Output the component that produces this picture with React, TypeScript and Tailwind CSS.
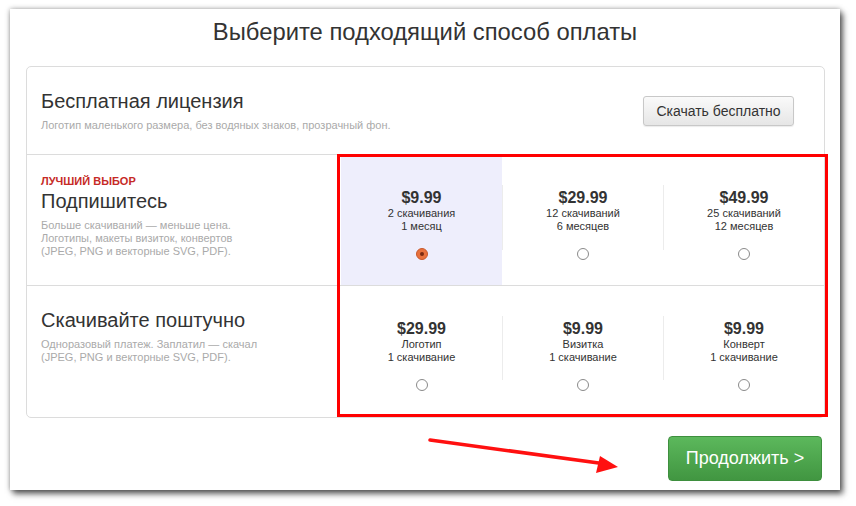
import React from "react";

const font = { fontFamily: '"Liberation Sans", Arial, sans-serif' };

function Radio({ checked }: { checked?: boolean }) {
  if (checked) {
    return (
      <div className="w-[12px] h-[12px] rounded-full bg-[#e8713c] border border-[#c9582a] flex items-center justify-center">
        <div className="w-[4px] h-[4px] rounded-full bg-[#7a2a10]" />
      </div>
    );
  }
  return <div className="w-[12px] h-[12px] rounded-full border border-[#8a8a8a] bg-white" />;
}

function Option({
  price,
  l1,
  l2,
  checked,
  divider,
  top,
  divH,
  radioTop,
  bg,
}: {
  price: string;
  l1: string;
  l2: string;
  checked?: boolean;
  divider?: boolean;
  top: string;
  divH: string;
  radioTop: string;
  bg?: boolean;
}) {
  return (
    <div className={`flex-1 flex flex-col items-center ${bg ? "bg-[#eeeefc]" : ""}`}>
      <div className={`w-full ${top} ${divH} flex flex-col items-center ${divider ? "border-l border-[#ececec]" : ""}`}>
        <div className="text-[16px] leading-[18px] font-bold text-[#333] mt-[4px]">{price}</div>
        <div className="text-[11px] leading-[13px] text-[#333]">{l1}</div>
        <div className="text-[11px] leading-[13px] text-[#333]">{l2}</div>
      </div>
      <div className={radioTop}>
        <Radio checked={checked} />
      </div>
    </div>
  );
}

export default function App() {
  return (
    <div className="w-[856px] h-[506px] bg-white relative overflow-hidden" style={font}>
      <div className="absolute left-[10px] top-[9px] w-[830px] h-[481px] bg-white shadow-[0_0_5px_rgba(0,0,0,0.35),3px_4px_6px_rgba(0,0,0,0.6)] flex flex-col">
        <div className="text-center text-[23.8px] leading-[28px] text-[#333] pt-[9px]">
          Выберите подходящий способ оплаты
        </div>
        <div className="mt-[20px] ml-[16px] w-[799px] border border-[#dcdcdc] rounded-[5px] flex flex-col">
          <div className="h-[88px] flex items-start justify-between border-b border-[#dcdcdc]">
            <div className="pl-[14px] pt-[22px]">
              <div className="text-[20px] leading-[24px] text-[#333]">Бесплатная лицензия</div>
              <div className="text-[11px] leading-[13px] text-[#aaa] mt-[6px]">
                Логотип маленького размера, без водяных знаков, прозрачный фон.
              </div>
            </div>
            <div className="mr-[30px] mt-[29px] w-[151px] h-[30px] rounded-[3px] border border-[#c8c8c8] bg-gradient-to-b from-[#fafafa] to-[#e6e6e6] shadow-[0_1px_1px_rgba(0,0,0,0.08)] flex items-center justify-center text-[14px] text-[#333]">
              Скачать бесплатно
            </div>
          </div>
          <div className="h-[131px] flex border-b border-[#dcdcdc]">
            <div className="w-[314px] pl-[14px] pt-[20px]">
              <div className="text-[11px] leading-[13px] font-bold text-[#c62a26]">ЛУЧШИЙ ВЫБОР</div>
              <div className="text-[20px] leading-[24px] text-[#333] mt-[1px]">Подпишитесь</div>
              <div className="text-[11px] leading-[13px] text-[#aaa] mt-[6px]">
                Больше скачиваний — меньше цена.
                <br />
                Логотипы, макеты визиток, конвертов
                <br />
                (JPEG, PNG и векторные SVG, PDF).
              </div>
            </div>
            <div className="flex-1 flex">
              <Option price="$9.99" l1="2 скачивания" l2="1 месяц" checked bg top="mt-[30px]" divH="h-[65px]" radioTop="-mt-[2px]" />
              <Option price="$29.99" l1="12 скачиваний" l2="6 месяцев" divider top="mt-[30px]" divH="h-[65px]" radioTop="-mt-[2px]" />
              <Option price="$49.99" l1="25 скачиваний" l2="12 месяцев" divider top="mt-[30px]" divH="h-[65px]" radioTop="-mt-[2px]" />
            </div>
          </div>
          <div className="h-[131px] flex">
            <div className="w-[314px] pl-[14px] pt-[22px]">
              <div className="text-[20px] leading-[24px] text-[#333]">Скачивайте поштучно</div>
              <div className="text-[11px] leading-[13px] text-[#aaa] mt-[6px]">
                Одноразовый платеж. Заплатил — скачал
                <br />
                (JPEG, PNG и векторные SVG, PDF).
              </div>
            </div>
            <div className="flex-1 flex">
              <Option price="$29.99" l1="Логотип" l2="1 скачивание" top="mt-[30px]" divH="h-[64px]" radioTop="-mt-[1px]" />
              <Option price="$9.99" l1="Визитка" l2="1 скачивание" divider top="mt-[30px]" divH="h-[64px]" radioTop="-mt-[1px]" />
              <Option price="$9.99" l1="Конверт" l2="1 скачивание" divider top="mt-[30px]" divH="h-[64px]" radioTop="-mt-[1px]" />
            </div>
          </div>
        </div>
        <div className="flex justify-end mt-[18px] mr-[18px]">
          <div className="w-[154px] h-[45px] rounded-[4px] border border-[#3e8f3e] bg-gradient-to-b from-[#5cb85c] to-[#419641] flex items-center justify-center text-[18px] text-white">
            Продолжить &gt;
          </div>
        </div>

        <div className="absolute left-[327px] top-[145px] w-[491px] h-[263px] border-[3px] border-[#ff0000]" />
        <svg className="absolute left-0 top-0" width="830" height="481" viewBox="0 0 830 481">
          <line x1="420" y1="431" x2="596" y2="455" stroke="#ff1010" strokeWidth="3.5" strokeLinecap="round" />
          <polygon points="608,458 586,464 590,447" fill="#ff1010" />
        </svg>
      </div>
    </div>
  );
}
